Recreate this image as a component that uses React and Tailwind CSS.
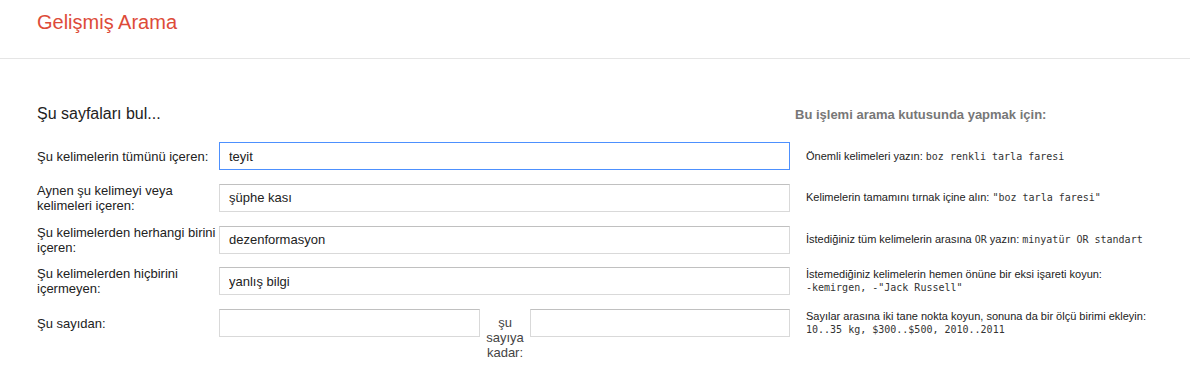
import React from 'react';

const mono = "font-['DejaVu_Sans_Mono',monospace] text-[10px] text-[#333]";

const Field = ({ value, focused, className }) => (
  <input
    type="text"
    readOnly
    value={value || ''}
    className={
      'h-[28px] bg-white px-[9px] text-[13px] text-[#222] outline-none border ' +
      (focused ? 'border-[#4d90fe] ' : 'border-[#d9d9d9] border-t-[#c0c0c0] ') +
      (className || 'w-[571px]')
    }
  />
);

const Row = ({ label, children, hint }) => (
  <div className="flex items-start">
    <div className="w-[182px] h-[28px] flex items-center text-[13px] leading-[15px] text-[#222]">
      <span>{label}</span>
    </div>
    {children}
    <div className="ml-[16px] h-[28px] flex items-center text-[11px] leading-[13px] text-[#222]">
      <div>{hint}</div>
    </div>
  </div>
);

const App = () => {
  return (
    <div className="w-[1190px] h-[374px] bg-white font-['Liberation_Sans',Arial,sans-serif] text-[#222]">
      <div className="h-[59px] border-b border-[#e5e5e5] pl-[37px] pt-[10px]">
        <h1 className="text-[20px] leading-[24px] text-[#dd4b39]">Gelişmiş Arama</h1>
      </div>

      <div className="pl-[37px] pt-[44.5px]">
        <div className="flex items-baseline h-[20px]">
          <div className="w-[758px] text-[16px] leading-[20px] text-[#222]">Şu sayfaları bul...</div>
          <div className="text-[13px] font-bold text-[#777]">Bu işlemi arama kutusunda yapmak için:</div>
        </div>

        <div className="mt-[18.5px] flex flex-col gap-[13.75px]">
          <Row
            label="Şu kelimelerin tümünü içeren:"
            hint={<>Önemli kelimeleri yazın: <span className={mono}>boz renkli tarla faresi</span></>}
          >
            <Field value="teyit" focused />
          </Row>

          <Row
            label="Aynen şu kelimeyi veya kelimeleri içeren:"
            hint={<>Kelimelerin tamamını tırnak içine alın: <span className={mono}>"boz tarla faresi"</span></>}
          >
            <Field value="şüphe kası" />
          </Row>

          <Row
            label="Şu kelimelerden herhangi birini içeren:"
            hint={
              <>
                İstediğiniz tüm kelimelerin arasına <span className={mono}>OR</span> yazın:{' '}
                <span className={mono}>minyatür OR standart</span>
              </>
            }
          >
            <Field value="dezenformasyon" />
          </Row>

          <Row
            label="Şu kelimelerden hiçbirini içermeyen:"
            hint={
              <>
                İstemediğiniz kelimelerin hemen önüne bir eksi işareti koyun:
                <br />
                <span className={mono}>-kemirgen, -"Jack Russell"</span>
              </>
            }
          >
            <Field value="yanlış bilgi" />
          </Row>

          <Row
            label="Şu sayıdan:"
            hint={
              <>
                Sayılar arasına iki tane nokta koyun, sonuna da bir ölçü birimi ekleyin:
                <br />
                <span className={mono}>10..35 kg, $300..$500, 2010..2011</span>
              </>
            }
          >
            <Field className="w-[261px]" />
            <div className="w-[50px] pt-[6px] text-center text-[13px] leading-[15px] text-[#444]">
              şu
              <br />
              sayıya
              <br />
              kadar:
            </div>
            <Field className="w-[260px]" />
          </Row>
        </div>
      </div>
    </div>
  );
};

export default App;
